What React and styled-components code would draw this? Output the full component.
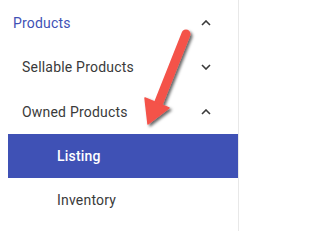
import React from 'react';
import styled, { createGlobalStyle } from 'styled-components';

const Global = createGlobalStyle`
  body {
    margin: 0;
    background: #fff;
    font-family: Roboto, "Liberation Sans", sans-serif;
  }
`

const Sidebar = styled.nav`
  position: relative;
  width: 238px;
  height: 231px;
  border-right: 1px solid #e8e8e8;
  overflow: hidden;
`

const Row = styled.div`
  display: flex;
  align-items: center;
  justify-content: space-between;
  height: ${(props) => props.h || 44}px;
  margin-left: ${(props) => props.inset || 0}px;
  padding-left: ${(props) => props.pad}px;
  padding-right: 27px;
  background: ${(props) => (props.active ? '#3f51b5' : 'transparent')};
`

const Label = styled.span`
  font-size: 14px;
  font-weight: ${(props) => (props.bold ? 500 : 400)};
  color: ${(props) => props.color || '#3a3a3a'};
  letter-spacing: 0.2px;
`

const Arrow = styled.svg`
  position: absolute;
  left: 0;
  top: 0;
  pointer-events: none;
`

const Chevron = ({ up }) => (
  <svg width="10" height="6" viewBox="0 0 10 6">
    <polyline
      points={up ? '1,5 5,1 9,5' : '1,1 5,5 9,1'}
      fill="none"
      stroke="#3a3a3a"
      strokeWidth="1.6"
    />
  </svg>
)

const App = () => {
  return (
    <>
      <Global />
      <Sidebar>
        <Row h={45} pad={13}>
          <Label color="#3f51b5">Products</Label>
          <Chevron up />
        </Row>
        <Row pad={22}>
          <Label>Sellable Products</Label>
          <Chevron />
        </Row>
        <Row h={45} pad={22}>
          <Label>Owned Products</Label>
          <Chevron up />
        </Row>
        <Row active inset={8} pad={49}>
          <Label bold color="#fff">Listing</Label>
        </Row>
        <Row pad={57}>
          <Label>Inventory</Label>
        </Row>

        <Arrow width="238" height="231" viewBox="0 0 238 231">
          <defs>
            <filter id="shadow" x="-50%" y="-50%" width="200%" height="200%">
              <feDropShadow dx="2" dy="2" stdDeviation="1.5" floodColor="#000" floodOpacity="0.6" />
            </filter>
          </defs>
          <g filter="url(#shadow)" fill="#f4524a" stroke="#f4524a">
            <line x1="186" y1="34" x2="159" y2="102" strokeWidth="9" strokeLinecap="round" />
            <polygon points="148,124 145,98 169,108" strokeWidth="1.5" strokeLinejoin="round" />
          </g>
        </Arrow>
      </Sidebar>
    </>
  );
};

export default App;
